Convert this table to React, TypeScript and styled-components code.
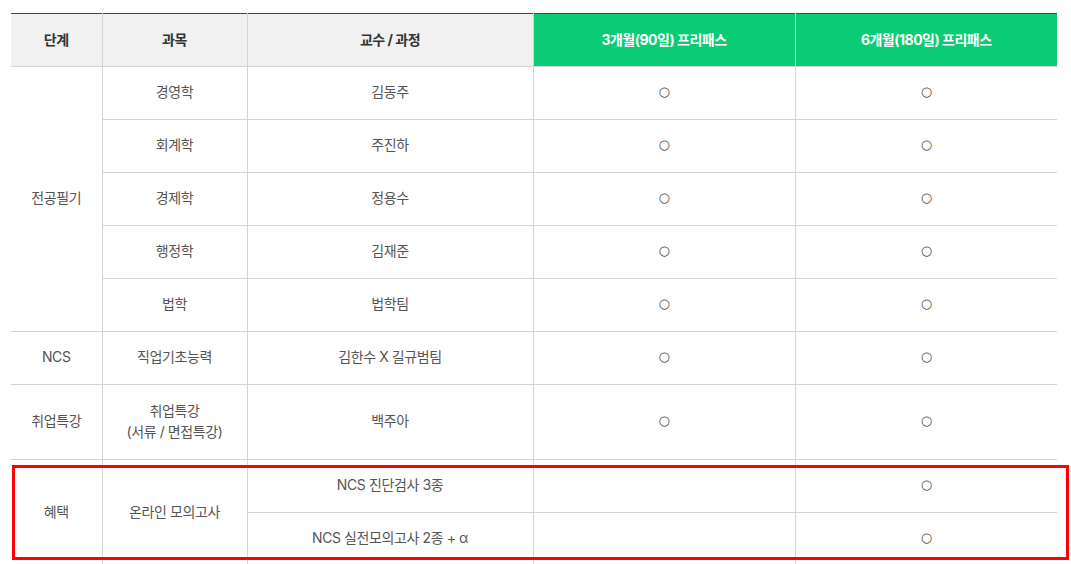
import React from "react";
import styled, { createGlobalStyle } from "styled-components";

const GlobalStyle = createGlobalStyle`
  html, body { margin: 0; padding: 0; background: #ffffff; }
  body { font-family: Inter, "Noto Sans CJK KR", sans-serif; }
`;

const Page = styled.div`
  padding: 13px 0 0 11px;
`;

const Frame = styled.div`
  position: relative;
  width: 1046px;
`;

const Table = styled.table`
  width: 1046px;
  border-collapse: collapse;
  table-layout: fixed;
  border-top: 1px solid #444444;
`;

const HeadCell = styled.th<{ $green?: boolean }>`
  height: 50px;
  padding: 0 0 2px;
  font-size: 14px;
  font-weight: 700;
  letter-spacing: -0.5px;
  text-align: center;
  vertical-align: middle;
  color: ${(p) => (p.$green ? "#ffffff" : "#333333")};
  background: ${(p) => (p.$green ? "#0bcb74" : "#f1f1f1")};
  border-left: 1px solid #d4d4d4;
  border-bottom: 1px solid #d4d4d4;
  &:first-child { border-left: none; }
`;

const Cell = styled.td<{ $tall?: boolean; $first?: boolean }>`
  height: ${(p) => (p.$tall ? "71px" : "49px")};
  padding: 0 0 3px;
  font-size: 14px;
  font-weight: 400;
  letter-spacing: -0.4px;
  line-height: 21px;
  text-align: center;
  vertical-align: middle;
  color: #555555;
  border-left: 1px solid #d4d4d4;
  border-bottom: 1px solid #d4d4d4;
  ${(p) => (p.$first ? "border-left: none;" : "")}
`;

const Mark = styled.span`
  font-family: "Noto Sans", "DejaVu Sans", sans-serif;
  font-size: 13px;
  color: #444444;
  vertical-align: 1px;
`;

const Highlight = styled.div`
  position: absolute;
  left: 1px;
  top: 452px;
  width: 1057px;
  height: 95px;
  box-sizing: border-box;
  border: 3px solid #ff0000;
  pointer-events: none;
`;

const O = () => <Mark>○</Mark>;

const majors = [
  ["경영학", "김동주"],
  ["회계학", "주진하"],
  ["경제학", "정용수"],
  ["행정학", "김재준"],
  ["법학", "법학팀"],
];

export default function App() {
  return (
    <>
      <GlobalStyle />
      <Page>
        <Frame>
          <Table>
            <colgroup>
              <col style={{ width: 91 }} />
              <col style={{ width: 145 }} />
              <col style={{ width: 286 }} />
              <col style={{ width: 262 }} />
              <col style={{ width: 262 }} />
            </colgroup>
            <thead>
              <tr>
                <HeadCell>단계</HeadCell>
                <HeadCell>과목</HeadCell>
                <HeadCell>교수 / 과정</HeadCell>
                <HeadCell $green>3개월(90일) 프리패스</HeadCell>
                <HeadCell $green>6개월(180일) 프리패스</HeadCell>
              </tr>
            </thead>
            <tbody>
              {majors.map(([subject, prof], i) => (
                <tr key={subject}>
                  {i === 0 && (
                    <Cell $first rowSpan={5}>
                      전공필기
                    </Cell>
                  )}
                  <Cell>{subject}</Cell>
                  <Cell>{prof}</Cell>
                  <Cell><O /></Cell>
                  <Cell><O /></Cell>
                </tr>
              ))}
              <tr>
                <Cell $first>NCS</Cell>
                <Cell>직업기초능력</Cell>
                <Cell>김한수 X 길규범팀</Cell>
                <Cell><O /></Cell>
                <Cell><O /></Cell>
              </tr>
              <tr>
                <Cell $first $tall>취업특강</Cell>
                <Cell $tall>
                  취업특강
                  <br />
                  (서류 / 면접특강)
                </Cell>
                <Cell $tall>백주아</Cell>
                <Cell $tall><O /></Cell>
                <Cell $tall><O /></Cell>
              </tr>
              <tr>
                <Cell $first rowSpan={2}>혜택</Cell>
                <Cell rowSpan={2}>온라인 모의고사</Cell>
                <Cell>NCS 진단검사 3종</Cell>
                <Cell />
                <Cell><O /></Cell>
              </tr>
              <tr>
                <Cell>NCS 실전모의고사 2종 + α</Cell>
                <Cell />
                <Cell><O /></Cell>
              </tr>
            </tbody>
          </Table>
          <Highlight />
        </Frame>
      </Page>
    </>
  );
}
